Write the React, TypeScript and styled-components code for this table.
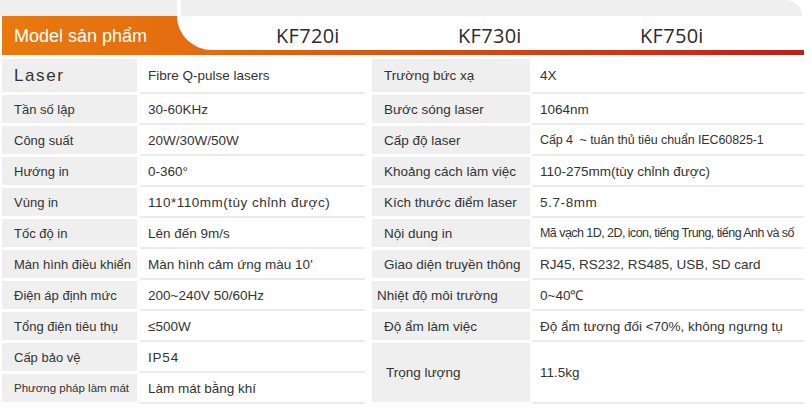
import styled, { createGlobalStyle } from "styled-components";

const GlobalStyle = createGlobalStyle`
  body {
    margin: 0;
    background: #ffffff;
    font-family: "Liberation Sans", Arial, sans-serif;
    color: #333333;
  }
`;

const Page = styled.div`
  width: 812px;
  height: 417px;
  overflow: hidden;
  background: #ffffff;
`;

const TopStrip = styled.div`
  display: flex;
  height: 16px;
  gap: 4px;
`;

const TopTab = styled.div<{ $width: number; $rounded?: boolean }>`
  width: ${(p) => p.$width}px;
  background: #efefef;
  border-top-right-radius: ${(p) => (p.$rounded ? "16px" : "0")};
`;

const Band = styled.div`
  margin-left: 2px;
  width: 802px;
  height: 39px;
  display: flex;
  align-items: flex-start;
  background: linear-gradient(90deg, #e9790e 0%, #e36c10 25%, #d64e15 55%, #c11d1c 100%);
`;

const BandTitle = styled.div`
  flex: 0 0 175px;
  height: 39px;
  box-sizing: border-box;
  padding: 10px 0 0 12px;
  color: #ffffff;
  font-size: 18px;
  line-height: 20px;
  white-space: nowrap;
`;

const ModelPanel = styled.div`
  flex: 1;
  min-width: 0;
  height: 34px;
  background: #ffffff;
  border-bottom-left-radius: 35px 34px;
  display: grid;
  grid-template-columns: 182px 182px 1fr;
  padding-left: 99px;
  box-sizing: border-box;
  align-items: center;
`;

const ModelName = styled.div`
  font-family: "Open Sans", "DejaVu Sans", sans-serif;
  font-size: 20px;
  color: #2b2b2b;
  padding-top: 4px;
  letter-spacing: 0.3px;
`;

const Tables = styled.div`
  display: flex;
  gap: 7px;
  padding-left: 2px;
  margin-top: 4px;
`;

const SpecTable = styled.div<{ $label: number; $value: number; $gap: number }>`
  display: grid;
  grid-template-columns: ${(p) => p.$label}px ${(p) => p.$value}px;
  grid-template-rows: 36px repeat(10, 31px);
  column-gap: ${(p) => p.$gap}px;
`;

const LabelCell = styled.div<{ $size?: number; $indent?: number; $span?: number }>`
  background: #efefef;
  background-clip: padding-box;
  border-bottom: 3px solid #ffffff;
  display: flex;
  align-items: center;
  padding-left: ${(p) => p.$indent ?? 12}px;
  font-size: ${(p) => p.$size ?? 13}px;
  letter-spacing: ${(p) => ((p.$size ?? 13) > 15 ? "1.6px" : "0")};
  white-space: nowrap;
  grid-row: span ${(p) => p.$span ?? 1};
`;

const ValueCell = styled.div<{ $size?: number; $spacing?: number; $span?: number }>`
  border-bottom: 2px solid #ebebeb;
  margin-bottom: 1px;
  display: flex;
  align-items: center;
  padding-left: 8px;
  font-size: ${(p) => p.$size ?? 13.5}px;
  letter-spacing: ${(p) => p.$spacing ?? 0}px;
  white-space: pre;
  grid-row: span ${(p) => p.$span ?? 1};
`;

type Spec = {
  label: string;
  value: string;
  labelSize?: number;
  indent?: number;
  size?: number;
  spacing?: number;
  span?: number;
};

const leftSpecs: Spec[] = [
  { label: "Laser", value: "Fibre Q-pulse lasers", labelSize: 17 },
  { label: "Tần số lập", value: "30-60KHz" },
  { label: "Công suất", value: "20W/30W/50W" },
  { label: "Hướng in", value: "0-360°" },
  { label: "Vùng in", value: "110*110mm(tùy chỉnh được)", spacing: 0.5 },
  { label: "Tốc độ in", value: "Lên đến 9m/s" },
  { label: "Màn hình điều khiển", value: "Màn hình cảm ứng màu 10'" },
  { label: "Điện áp định mức", value: "200~240V 50/60Hz" },
  { label: "Tổng điện tiêu thụ", value: "≤500W" },
  { label: "Cấp bảo vệ", value: "IP54", spacing: 0.8 },
  { label: "Phương pháp làm mát", value: "Làm mát bằng khí", labelSize: 11.5 },
];

const rightSpecs: Spec[] = [
  { label: "Trường bức xạ", value: "4X" },
  { label: "Bước sóng laser", value: "1064nm" },
  { label: "Cấp độ laser", value: "Cấp 4  ~ tuân thủ tiêu chuẩn IEC60825-1", size: 12.5, spacing: -0.1 },
  { label: "Khoảng cách làm việc", value: "110-275mm(tùy chỉnh được)" },
  { label: "Kích thước điểm laser", value: "5.7-8mm", spacing: 0.6 },
  { label: "Nội dung in", value: "Mã vạch 1D, 2D, icon, tiếng Trung, tiếng Anh và số", size: 12.5, spacing: -0.55 },
  { label: "Giao diện truyền thông", value: "RJ45, RS232, RS485, USB, SD card" },
  { label: "Nhiệt độ môi trường", value: "0~40℃", indent: 5 },
  { label: "Độ ẩm làm việc", value: "Độ ẩm tương đối <70%, không ngưng tụ" },
  { label: "Trọng lượng", value: "11.5kg", span: 2, indent: 14 },
];

function SpecRows({ specs, labelSize }: { specs: Spec[]; labelSize: number }) {
  return (
    <>
      {specs.map((s) => [
        <LabelCell
          key={s.label + "-l"}
          $size={s.labelSize ?? labelSize}
          $indent={s.indent}
          $span={s.span}
        >
          {s.label}
        </LabelCell>,
        <ValueCell key={s.label + "-v"} $size={s.size} $spacing={s.spacing} $span={s.span}>
          {s.value}
        </ValueCell>,
      ])}
    </>
  );
}

export default function App() {
  return (
    <Page>
      <GlobalStyle />
      <TopStrip>
        <TopTab $width={177} />
        <TopTab $width={621} $rounded />
      </TopStrip>
      <Band>
        <BandTitle>Model sản phẩm</BandTitle>
        <ModelPanel>
          <ModelName>KF720i</ModelName>
          <ModelName>KF730i</ModelName>
          <ModelName>KF750i</ModelName>
        </ModelPanel>
      </Band>
      <Tables>
        <SpecTable $label={135} $value={225} $gap={3}>
          <SpecRows specs={leftSpecs} labelSize={13} />
        </SpecTable>
        <SpecTable $label={158} $value={272} $gap={2}>
          <SpecRows specs={rightSpecs} labelSize={13.5} />
        </SpecTable>
      </Tables>
    </Page>
  );
}
